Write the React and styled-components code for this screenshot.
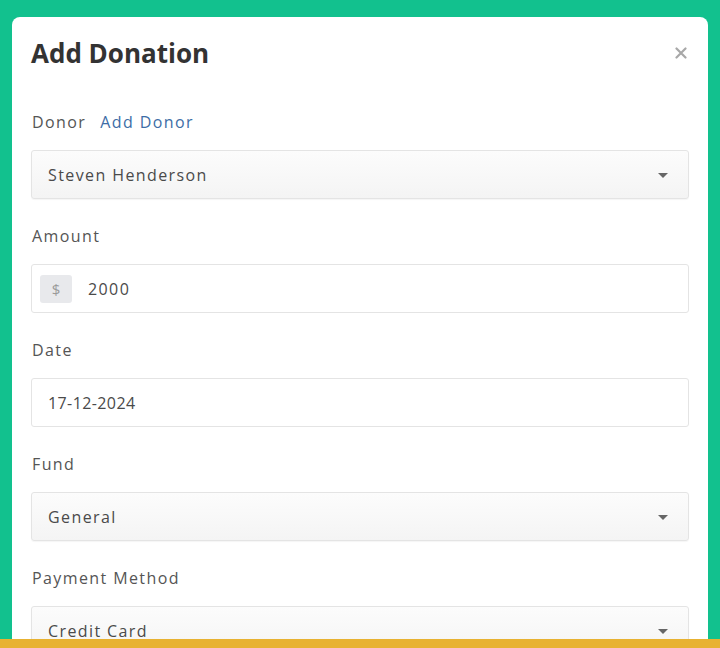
import React from "react";
import styled, { createGlobalStyle } from "styled-components";

const GlobalStyle = createGlobalStyle`
  html, body {
    margin: 0;
    padding: 0;
  }
  body {
    font-family: "Open Sans", "Noto Sans", sans-serif;
    color: #444;
  }
`;

const Page = styled.div`
  width: 720px;
  height: 648px;
  display: flex;
  flex-direction: column;
  overflow: hidden;
`;

const Backdrop = styled.div`
  flex: 1;
  min-height: 0;
  background-color: #12c18e;
  padding: 17px 12px 0 12px;
  overflow: hidden;
`;

const Card = styled.div`
  background: #fff;
  border-radius: 8px 8px 0 0;
  padding: 0 19px 40px 19px;
`;

const Header = styled.div`
  display: flex;
  justify-content: space-between;
  align-items: center;
  padding-top: 18px;
  margin-bottom: 39px;
`;

const Title = styled.h2`
  margin: 0;
  font-size: 26px;
  line-height: 36px;
  font-weight: 700;
  color: #333;
`;

const Close = styled.button`
  border: none;
  background: none;
  padding: 0;
  margin-right: 1px;
  width: 14px;
  height: 14px;
  display: flex;
  align-items: center;
  justify-content: center;
  cursor: pointer;
`;

const Field = styled.div`
  margin-bottom: 25px;
`;

const LabelRow = styled.div`
  display: flex;
  align-items: center;
  gap: 14px;
  height: 24px;
  margin-bottom: 16px;
  padding-left: 1px;
`;

const Label = styled.label`
  font-size: 16px;
  letter-spacing: 1.4px;
  color: #555;
`;

const Link = styled.a`
  font-size: 16px;
  letter-spacing: 1.4px;
  color: #3d6da6;
  text-decoration: none;
  cursor: pointer;
`;

const Box = styled.div`
  box-sizing: border-box;
  height: 49px;
  border: 1px solid #e4e4e4;
  border-radius: 3px;
  display: flex;
  align-items: center;
  padding: 0 20px 0 16px;
  font-size: 16px;
  color: #4a4a4a;
  background: ${(p) =>
    p.$select ? "linear-gradient(#fcfcfc, #f4f4f4)" : "#fff"};
  box-shadow: ${(p) => (p.$select ? "0 1px 1px rgba(0,0,0,0.04)" : "none")};
`;

const Value = styled.span`
  flex: 1;
  letter-spacing: ${(p) => p.$spacing ?? "1.4px"};
`;

const Addon = styled.span`
  width: 32px;
  height: 28px;
  margin: 0 16px 0 -8px;
  border-radius: 3px;
  background: #e8e9ec;
  color: #9a9a9a;
  display: flex;
  align-items: center;
  justify-content: center;
  font-size: 15px;
`;

const Caret = styled.span`
  width: 0;
  height: 0;
  border-left: 5px solid transparent;
  border-right: 5px solid transparent;
  border-top: 5px solid #666;
  margin-top: 2px;
`;

function Select({ value }) {
  return (
    <Box $select>
      <Value>{value}</Value>
      <Caret />
    </Box>
  );
}

const BottomBar = styled.div`
  height: 9px;
  flex-shrink: 0;
  background: #e8b231;
`;

export default function App() {
  return (
    <>
      <GlobalStyle />
      <Page>
        <Backdrop>
          <Card>
            <Header>
              <Title>Add Donation</Title>
              <Close aria-label="Close">
                <svg width="12" height="12" viewBox="0 0 12 12">
                  <path
                    d="M1.5 1.5 L10.5 10.5 M10.5 1.5 L1.5 10.5"
                    stroke="#a8a8a8"
                    strokeWidth="2.2"
                    strokeLinecap="round"
                  />
                </svg>
              </Close>
            </Header>

            <Field>
              <LabelRow>
                <Label>Donor</Label>
                <Link>Add Donor</Link>
              </LabelRow>
              <Select value="Steven Henderson" />
            </Field>

            <Field>
              <LabelRow>
                <Label>Amount</Label>
              </LabelRow>
              <Box>
                <Addon>$</Addon>
                <Value>2000</Value>
              </Box>
            </Field>

            <Field>
              <LabelRow>
                <Label>Date</Label>
              </LabelRow>
              <Box>
                <Value $spacing="0.4px">17-12-2024</Value>
              </Box>
            </Field>

            <Field>
              <LabelRow>
                <Label>Fund</Label>
              </LabelRow>
              <Select value="General" />
            </Field>

            <Field>
              <LabelRow>
                <Label>Payment Method</Label>
              </LabelRow>
              <Select value="Credit Card" />
            </Field>
          </Card>
        </Backdrop>
        <BottomBar />
      </Page>
    </>
  );
}
